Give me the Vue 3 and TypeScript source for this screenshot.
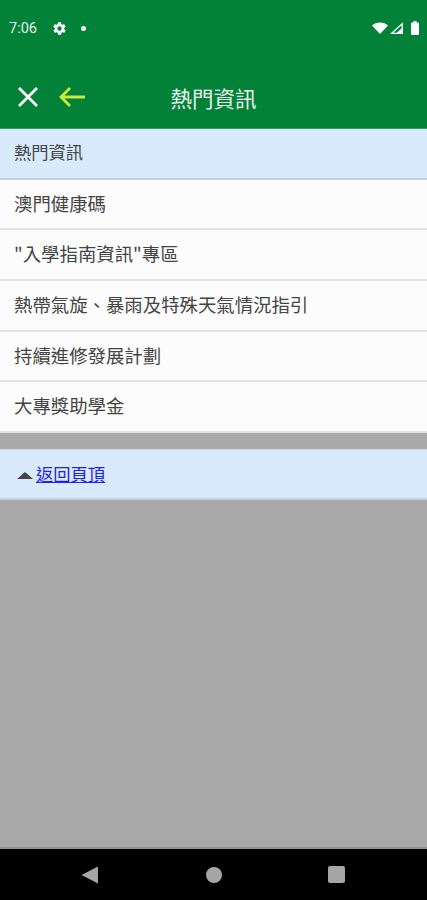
<template>
  <div class="screen">
    <header class="appbar">
      <div class="status">
        <span class="time">7:06</span>
        <svg class="gear" viewBox="0 0 24 24" width="15" height="15">
          <path fill="#fff" fill-rule="evenodd" d="M19.4 13c.1-.3.1-.7.1-1s0-.7-.1-1l2.1-1.6c.2-.2.2-.4.1-.6l-2-3.5c-.1-.2-.4-.3-.6-.2l-2.5 1c-.5-.4-1.100-.7-1.700-1l-.4-2.600c0-.3-.2-.4-.5-.4h-4c-.3 0-.5.100-.5.400l-.4 2.600c-.6.300-1.200.600-1.700 1l-2.500-1c-.2-.1-.5 0-.6.200l-2 3.500c-.1.200-.1.400.1.600L4.600 11c-.1.300-.1.700-.1 1s0 .7.100 1l-2.100 1.600c-.2.200-.2.400-.1.600l2 3.500c.1.200.4.300.6.200l2.500-1c.5.400 1.100.700 1.700 1l.4 2.600c0 .3.200.4.500.4h4c.3 0 .5-.1.500-.4l.4-2.600c.6-.3 1.200-.6 1.700-1l2.500 1c.2.100.5 0 .6-.2l2-3.500c.1-.2.1-.4-.1-.6L19.400 13zM12 15.500a3.500 3.500 0 1 1 0-7 3.500 3.500 0 0 1 0 7z"/>
        </svg>
        <span class="dot"></span>
        <span class="status-right">
          <svg viewBox="0 0 16 12" width="16" height="12"><path fill="#fff" d="M0 3.500C2 1.500 5 .5 8 .5s6 1 8 3l-8 8.500z"/></svg>
          <svg class="signal" viewBox="0 0 13 12" width="13" height="12"><path fill="none" stroke="#fff" stroke-width="1.300" d="M1.700 11.300 12.300 1.700v9.600z"/><path fill="#fff" d="M6 11.500 12 6v5.500z"/></svg>
          <svg class="battery" viewBox="0 0 8 14" width="8" height="14"><path fill="#fff" d="M2.500 0h3v1.500H7a1 1 0 0 1 1 1V13a1 1 0 0 1-1 1H1a1 1 0 0 1-1-1V2.500a1 1 0 0 1 1-1h1.500z"/></svg>
        </span>
      </div>
      <div class="toolbar">
        <svg class="close" viewBox="0 0 22 22" width="22" height="22">
          <path stroke="#fff" stroke-width="2.800" d="M2 2 20 20M20 2 2 20"/>
        </svg>
        <svg class="back" viewBox="0 0 27 22" width="27" height="22">
          <path fill="none" stroke="#cfe83c" stroke-width="2.800" d="M27 11H3M12 2 3 11l9 9"/>
        </svg>
        <h1 class="title">熱門資訊</h1>
      </div>
    </header>

    <ul class="list">
      <li class="row head">熱門資訊</li>
      <li v-for="item in items" :key="item" class="row">{{ item }}</li>
    </ul>

    <div class="top-link">
      <span class="arrow"></span>
      <a href="#">返回頁頂</a>
    </div>

    <div class="filler"></div>

    <nav class="navbar">
      <svg viewBox="0 0 18 18" width="18" height="18"><path fill="#a6a6a6" d="M17 .5v17L.5 9z"/></svg>
      <span class="circle"></span>
      <span class="square"></span>
    </nav>
  </div>
</template>

<script setup lang="ts">
const items: string[] = [
  '澳門健康碼',
  '"入學指南資訊"專區',
  '熱帶氣旋、暴雨及特殊天氣情況指引',
  '持續進修發展計劃',
  '大專獎助學金',
]
</script>

<style>
html,
body {
  margin: 0;
  padding: 0;
}
</style>

<style scoped>
.screen {
  width: 427px;
  height: 900px;
  display: flex;
  flex-direction: column;
  background: #a9a9a9;
  font-family: "Noto Sans CJK TC", "Noto Sans", sans-serif;
  overflow: hidden;
}

.appbar {
  height: 129px;
  flex: none;
  background: #028238;
  color: #fff;
  box-sizing: border-box;
  border-bottom: 1px solid #3b9c63;
}

.status {
  height: 56px;
  display: flex;
  align-items: center;
  padding: 0 8px 0 9px;
}

.time {
  font-family: Roboto, sans-serif;
  font-size: 14.500px;
  color: #e4efe8;
  width: 43px;
}

.dot {
  width: 5px;
  height: 5px;
  border-radius: 50%;
  background: #fff;
  margin-left: 14px;
}

.status-right {
  margin-left: auto;
  display: flex;
  align-items: center;
}

.signal {
  margin-left: 2px;
}

.battery {
  margin-left: 8px;
}

.toolbar {
  height: 72px;
  position: relative;
  display: flex;
  align-items: center;
  padding: 10px 0 0 17px;
  box-sizing: border-box;
}

.back {
  margin-left: 19px;
}

.title {
  position: absolute;
  left: 0;
  right: 0;
  top: 0;
  margin: 0;
  text-align: center;
  font-size: 21.500px;
  line-height: 84px;
  font-weight: 400;
  color: #e9f3ec;
}

.list {
  list-style: none;
  margin: 0;
  padding: 0;
}

.row {
  height: 48.670px;
  padding-left: 14px;
  background: #fcfcfc;
  border-bottom: 2px solid #e2e2e2;
  color: #444;
  font-size: 18.400px;
  line-height: 46px;
  white-space: nowrap;
}

.head {
  background: #d8eafc;
  border-bottom-color: #c5d0da;
  font-size: 17.300px;
}

.top-link {
  height: 48px;
  margin-top: 16px;
  flex: none;
  display: flex;
  align-items: center;
  padding-left: 17px;
  background: #d8eafc;
  border-top: 1px solid #cdd8e2;
  border-bottom: 2px solid #c5cfd8;
  font-size: 17.300px;
}

.top-link a {
  color: #2222e6;
  text-decoration: underline;
}

.arrow {
  width: 0;
  height: 0;
  border-left: 8px solid transparent;
  border-right: 8px solid transparent;
  border-bottom: 7px solid #444;
  margin: 3px 3px 0 0;
}

.filler {
  flex: 1;
  border-bottom: 2px solid #8f8f8f;
}

.navbar {
  height: 51px;
  flex: none;
  background: #000;
  display: flex;
  align-items: center;
  padding-left: 81px;
}

.circle {
  width: 16px;
  height: 16px;
  border-radius: 50%;
  background: #a6a6a6;
  margin-left: 107px;
}

.square {
  width: 17px;
  height: 17px;
  border-radius: 2px;
  background: #a6a6a6;
  margin-left: 106px;
}
</style>
